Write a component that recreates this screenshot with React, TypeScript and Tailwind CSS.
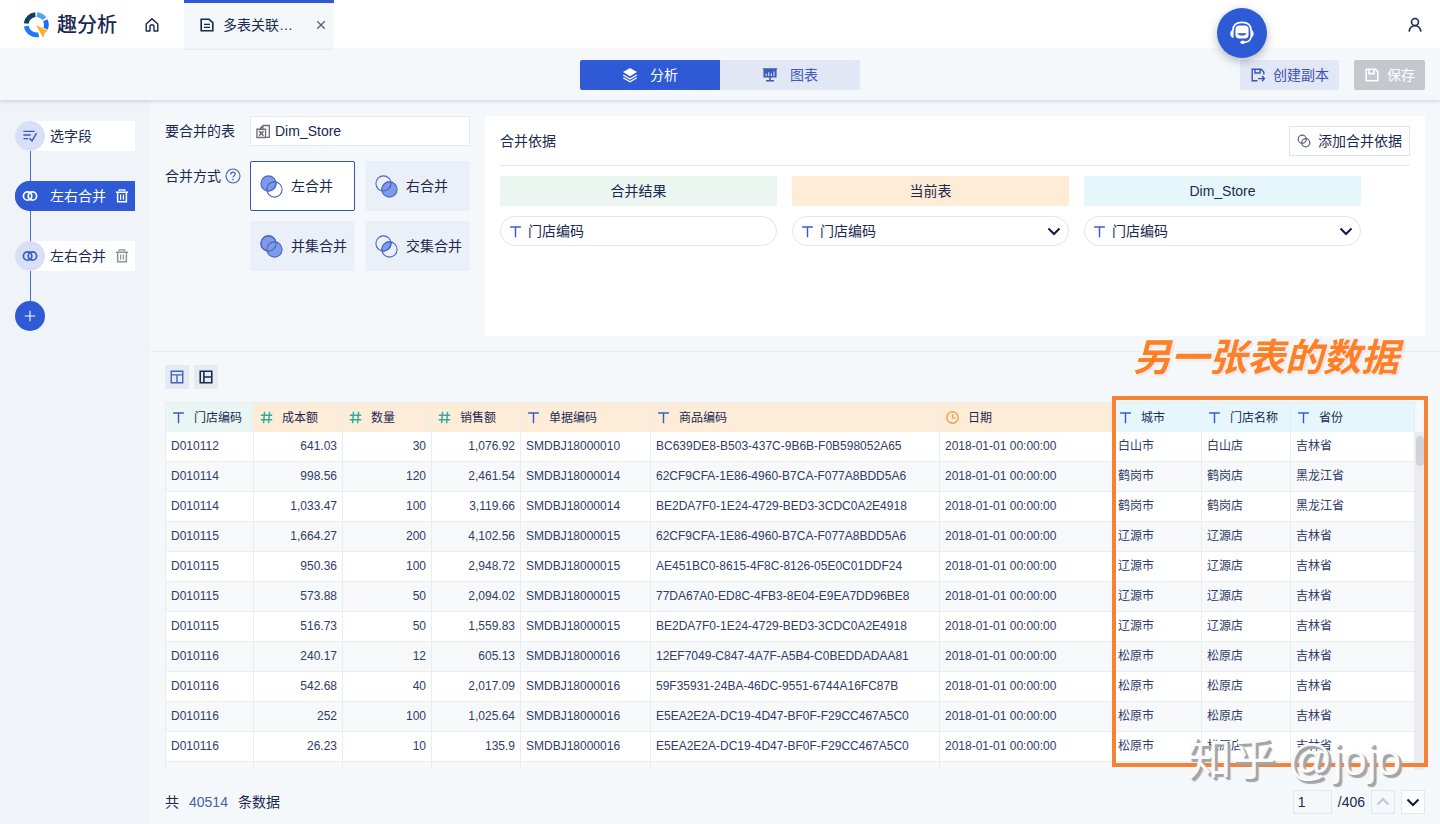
import { useState } from 'react';
import type { ReactNode } from 'react';
import clsx from 'clsx';

type FieldType = 'text' | 'number' | 'date';
type JoinMode = 'left' | 'right' | 'union' | 'inner';

interface Column {
  label: string;
  type: FieldType;
  width: string;
  tone: string;
}

const columns: Column[] = [
  { label: '门店编码', type: 'text', width: 'w-[88px]', tone: 'bg-[#e9f6f3]' },
  { label: '成本额', type: 'number', width: 'w-[89px]', tone: 'bg-[#fdecd8]' },
  { label: '数量', type: 'number', width: 'w-[89px]', tone: 'bg-[#fdecd8]' },
  { label: '销售额', type: 'number', width: 'w-[89px]', tone: 'bg-[#fdecd8]' },
  { label: '单据编码', type: 'text', width: 'w-[130px]', tone: 'bg-[#fdecd8]' },
  { label: '商品编码', type: 'text', width: '', tone: 'bg-[#fdecd8]' },
  { label: '日期', type: 'date', width: 'w-[173px]', tone: 'bg-[#fdecd8]' },
  { label: '城市', type: 'text', width: 'w-[89px]', tone: 'bg-[#e5f7fd]' },
  { label: '门店名称', type: 'text', width: 'w-[89px]', tone: 'bg-[#e5f7fd]' },
  { label: '省份', type: 'text', width: 'w-[124px]', tone: 'bg-[#e5f7fd]' },
];

const date = '2018-01-01 00:00:00';

const rows = [
  ['D010112', '641.03', '30', '1,076.92', 'SMDBJ18000010', 'BC639DE8-B503-437C-9B6B-F0B598052A65', date, '白山市', '白山店', '吉林省'],
  ['D010114', '998.56', '120', '2,461.54', 'SMDBJ18000014', '62CF9CFA-1E86-4960-B7CA-F077A8BDD5A6', date, '鹤岗市', '鹤岗店', '黑龙江省'],
  ['D010114', '1,033.47', '100', '3,119.66', 'SMDBJ18000014', 'BE2DA7F0-1E24-4729-BED3-3CDC0A2E4918', date, '鹤岗市', '鹤岗店', '黑龙江省'],
  ['D010115', '1,664.27', '200', '4,102.56', 'SMDBJ18000015', '62CF9CFA-1E86-4960-B7CA-F077A8BDD5A6', date, '辽源市', '辽源店', '吉林省'],
  ['D010115', '950.36', '100', '2,948.72', 'SMDBJ18000015', 'AE451BC0-8615-4F8C-8126-05E0C01DDF24', date, '辽源市', '辽源店', '吉林省'],
  ['D010115', '573.88', '50', '2,094.02', 'SMDBJ18000015', '77DA67A0-ED8C-4FB3-8E04-E9EA7DD96BE8', date, '辽源市', '辽源店', '吉林省'],
  ['D010115', '516.73', '50', '1,559.83', 'SMDBJ18000015', 'BE2DA7F0-1E24-4729-BED3-3CDC0A2E4918', date, '辽源市', '辽源店', '吉林省'],
  ['D010116', '240.17', '12', '605.13', 'SMDBJ18000016', '12EF7049-C847-4A7F-A5B4-C0BEDDADAA81', date, '松原市', '松原店', '吉林省'],
  ['D010116', '542.68', '40', '2,017.09', 'SMDBJ18000016', '59F35931-24BA-46DC-9551-6744A16FC87B', date, '松原市', '松原店', '吉林省'],
  ['D010116', '252', '100', '1,025.64', 'SMDBJ18000016', 'E5EA2E2A-DC19-4D47-BF0F-F29CC467A5C0', date, '松原市', '松原店', '吉林省'],
  ['D010116', '26.23', '10', '135.9', 'SMDBJ18000016', 'E5EA2E2A-DC19-4D47-BF0F-F29CC467A5C0', date, '松原市', '松原店', '吉林省'],
  ['', '', '', '', '', '', '', '', '', ''],
];

const joinModes: { id: JoinMode; label: string }[] = [
  { id: 'left', label: '左合并' },
  { id: 'right', label: '右合并' },
  { id: 'union', label: '并集合并' },
  { id: 'inner', label: '交集合并' },
];

const Icon = ({ size = 16, className, children }: { size?: number; className?: string; children: ReactNode }) => (
  <svg
    width={size}
    height={size}
    viewBox="0 0 16 16"
    fill="none"
    stroke="currentColor"
    strokeWidth="1.4"
    className={clsx('shrink-0', className)}
    aria-hidden="true"
  >
    {children}
  </svg>
);

const Logo = () => (
  <svg width="28" height="28" viewBox="0 0 28 28" fill="none" className="shrink-0" aria-hidden="true">
    <g strokeWidth="4.8">
      <path d="M4.1 12.6A10.2 10.2 0 0 1 13.4 3.6" stroke="#0d4066" />
      <path d="M15 3.6A10.2 10.2 0 0 1 22.4 7.8" stroke="#56a5f5" />
      <path d="M23.3 9.2A10.2 10.2 0 0 1 23.4 18" stroke="#1f6cf5" />
      <path d="M4.3 15.2A10.2 10.2 0 0 0 16.6 23.6" stroke="#1f7af8" />
    </g>
    <path d="M13.4 13.4L27 19.8L23.4 21.6L21 27.6Z" fill="#fbb01f" stroke="#fff" strokeWidth="0.8" />
  </svg>
);

const HomeIcon = () => (
  <Icon>
    <path d="M2.2 7L8 1.9L13.8 7V14H10V9.8A2 2 0 0 0 6 9.8V14H2.2Z" strokeLinejoin="round" />
  </Icon>
);

const DocIcon = () => (
  <Icon className="text-[#16294f]">
    <path d="M2.2 2.2H10L13.8 5.6V13.8H2.2Z" strokeWidth="1.6" />
    <path d="M5 7.4H11M5 10.4H11" />
  </Icon>
);

const LayersIcon = () => (
  <Icon>
    <path d="M8 1L15 5L8 9.2L1 5Z" fill="currentColor" stroke="none" />
    <path d="M1.2 8L8 12L14.8 8M1.2 10.8L8 14.8L14.8 10.8" strokeWidth="1.3" />
  </Icon>
);

const BoardIcon = () => (
  <Icon>
    <path d="M0.8 1.2H15.2V2.6H14.6V10.6H8.8V13H12V14.4H4V13H7.2V10.6H1.4V2.6H0.8Z" fill="currentColor" stroke="none" />
    <path d="M4.2 9V6.8M6.8 9V5.2M9.4 9V6.6M12 9V4.4" stroke="#e2e7f6" strokeWidth="1.1" />
  </Icon>
);

const CopyIcon = () => (
  <Icon>
    <path d="M7.5 13.8H2.2V2.2H11L13.8 5V7.6" />
    <path d="M5 2.4V6H10V2.4M8 11.6H14M12 9L14.4 11.6L12 14.2" />
  </Icon>
);

const SaveIcon = () => (
  <Icon>
    <path d="M2.2 2.2H11.4L13.8 4.6V13.8H2.2Z" strokeWidth="1.6" />
    <path d="M5 2.4V6.6H10V2.4" strokeWidth="1.6" />
  </Icon>
);

const UserIcon = () => (
  <Icon>
    <circle cx="8" cy="5" r="3.5" strokeWidth="1.6" />
    <path d="M2.2 14.6C2.6 10.8 5 8.8 8 8.8S13.4 10.8 13.8 14.6" strokeWidth="1.6" />
  </Icon>
);

const HeadsetIcon = () => (
  <svg width="28" height="28" viewBox="0 0 28 28" fill="none" stroke="#fff" aria-hidden="true">
    <path d="M5 11.5C5 5.4 8 3.4 14 3.4S23 5.4 23 11.5" strokeWidth="1.6" />
    <rect x="7.4" y="6.6" width="13.2" height="13" rx="4" fill="#fff" stroke="none" />
    <path d="M9.4 14.2H18.6C17.8 17.4 10.2 17.4 9.4 14.2Z" fill="#2f5ad6" stroke="none" />
    <path d="M5.6 10.4C1.2 11 1.2 18.4 5.6 19ZM22.4 10.4C26.8 11 26.8 18.4 22.4 19Z" fill="#fff" stroke="none" />
    <path d="M23 18.2C22.4 21.6 19.6 23.4 15.4 23.4" strokeWidth="1.6" />
    <ellipse cx="14.8" cy="23.2" rx="2.4" ry="1.7" fill="#fff" stroke="none" />
  </svg>
);

const SelectFieldsIcon = () => (
  <Icon>
    <path d="M1.4 3.4H12.6M1.4 7H8.6M1.4 10.6H6" />
    <path d="M7.4 10.2L10 12.8L14.6 5.2" />
  </Icon>
);

const LinkIcon = () => (
  <Icon>
    <circle cx="5.6" cy="8" r="4.2" strokeWidth="1.7" />
    <circle cx="10.4" cy="8" r="4.2" strokeWidth="1.7" />
  </Icon>
);

const TrashIcon = () => (
  <Icon size={14}>
    <path d="M5 2.4V1H11V2.4M1 3.6H15M3 4V14.6H13V4" strokeWidth="1.7" />
    <path d="M6.4 6.4V12.2M9.6 6.4V12.2" strokeWidth="1.4" />
  </Icon>
);

const ExcelIcon = () => (
  <Icon size={15} className="text-[#6b6e78]">
    <path d="M4.8 5.4V4.4L7.6 1.6H14.2V14.2H10.4" />
    <path d="M4.4 5L8 1.4V5Z" fill="currentColor" stroke="none" />
    <path d="M1 5.6H10.2V14.4H1Z" />
    <path d="M3.4 7.6L8 12.4M8 7.6L3.4 12.4" strokeWidth="1.6" />
  </Icon>
);

const HelpIcon = () => (
  <Icon className="text-[#3a5fc0]">
    <circle cx="8" cy="8" r="7" strokeWidth="1.1" />
    <path d="M5.8 6.4C5.8 3.4 10.4 3.6 10.2 6.2C10.1 7.6 8 7.8 8 9.6" strokeWidth="1.2" />
    <circle cx="8" cy="11.6" r="0.8" fill="currentColor" stroke="none" />
  </Icon>
);

const RingsIcon = () => (
  <Icon size={14} className="text-[#5d6274]">
    <circle cx="6" cy="6" r="4.6" />
    <circle cx="10" cy="10" r="4.6" />
  </Icon>
);

const Chevron = ({ up = false, className }: { up?: boolean; className?: string }) => (
  <Icon className={className}>
    <path d={up ? 'M2.5 10.5L8 5L13.5 10.5' : 'M2.5 5.5L8 11L13.5 5.5'} strokeWidth="2" />
  </Icon>
);

const JoinIcon = ({ mode }: { mode: JoinMode }) => (
  <svg width="23" height="23" viewBox="0 0 23 23" fill="none" stroke="#4767bd" strokeWidth="1.1" className="shrink-0" aria-hidden="true">
    <circle cx="8.5" cy="8.5" r="7.6" fill={mode === 'left' || mode === 'union' ? '#7f9aea' : 'none'} />
    <circle cx="14.5" cy="14.5" r="7.6" fill={mode === 'right' || mode === 'union' ? '#7f9aea' : 'none'} />
    {mode !== 'union' && (
      <path d="M15.8 7A7.6 7.6 0 0 1 7 15.8A7.6 7.6 0 0 1 15.8 7Z" fill="#7f9aea" />
    )}
    {mode === 'union' && <circle cx="8.5" cy="8.5" r="7.6" />}
  </svg>
);

const TypeIcon = ({ type }: { type: FieldType }) => {
  if (type === 'number') {
    return (
      <Icon size={13} className="text-[#37a99a]">
        <path d="M5.6 1L4.4 15M11.8 1L10.6 15M1 5.2H15M1 10.8H15" strokeWidth="1.8" />
      </Icon>
    );
  }
  if (type === 'date') {
    return (
      <Icon size={13} className="text-[#eda24c]">
        <circle cx="8" cy="8" r="7" strokeWidth="1.7" />
        <path d="M8 3.8V8.4H11.6" strokeWidth="1.5" />
      </Icon>
    );
  }
  return (
    <Icon size={13} className="text-[#3c5cc4]">
      <path d="M1.4 2.4H14.6M8 2.4V15" strokeWidth="1.8" />
    </Icon>
  );
};

const Header = () => (
  <header className="flex h-[50px] shrink-0 items-stretch bg-white">
    <div className="flex w-[118px] items-center gap-[7px] pl-[22px]">
      <Logo />
      <span className="text-xl font-medium whitespace-nowrap">趣分析</span>
    </div>
    <a href="#home" aria-label="首页" className="ml-[26px] flex items-center">
      <HomeIcon />
    </a>
    <div className="ml-6 flex w-[150px] items-center border-t-[3px] border-[#2f5ad6] bg-[#f5f8fb] pr-2 pb-[3px] pl-[15px] text-sm">
      <DocIcon />
      <span className="ml-2 flex-1 truncate">多表关联…</span>
      <button aria-label="关闭" className="text-[#5b6070]">
        <Icon size={10}>
          <path d="M2 2L14 14M14 2L2 14" strokeWidth="2.2" />
        </Icon>
      </button>
    </div>
    <button aria-label="用户" className="mr-[17px] ml-auto">
      <UserIcon />
    </button>
  </header>
);

const Toolbar = () => (
  <div className="relative z-10 grid h-[50px] shrink-0 grid-cols-[1fr_280px_1fr] items-center bg-[#f5f8fb] px-[15px] text-sm shadow-[0_1px_4px_rgba(60,80,100,0.25)]">
    <div className="col-start-2 grid h-[30px] grid-cols-2">
      <button className="flex items-center justify-center gap-3 rounded-l-xs bg-[#2f5ad6] text-white">
        <LayersIcon />
        分析
      </button>
      <button className="flex items-center justify-center gap-3 rounded-r-xs bg-[#e2e7f6] text-[#3c5cb8]">
        <BoardIcon />
        图表
      </button>
    </div>
    <div className="flex h-[30px] justify-end gap-[15px]">
      <button className="flex items-center gap-[7px] rounded-xs bg-[#e2e7f6] px-[10px] text-[#3c50b4]">
        <CopyIcon />
        创建副本
      </button>
      <button className="flex items-center gap-[7px] rounded-xs bg-[#c6c6cf] px-[10px] text-white">
        <SaveIcon />
        保存
      </button>
    </div>
  </div>
);

const Step = ({ label, icon, active = false, removable = false }: { label: string; icon: ReactNode; active?: boolean; removable?: boolean }) => (
  <li>
    <div
      className={clsx(
        'flex h-[30px] items-center rounded-l-full',
        active ? 'bg-[#2f5ad6] text-white' : 'bg-white',
      )}
    >
      <span
        className={clsx(
          'flex size-[30px] items-center justify-center rounded-full',
          active ? 'bg-[#2f5ad6]' : 'bg-[#d9e0f5] text-[#3459c9]',
        )}
      >
        {icon}
      </span>
      <span className="ml-[5px]">{label}</span>
      {removable && (
        <button aria-label={`删除${label}`} className={clsx('mr-1.5 ml-auto', !active && 'text-[#8f9299]')}>
          <TrashIcon />
        </button>
      )}
    </div>
    <div className="ml-[15px] h-[30px] w-px bg-[#4a6cd0]" />
  </li>
);

const Sidebar = () => (
  <aside className="w-[150px] shrink-0 bg-[#f0f3f7] px-[15px] pt-[21px] text-sm">
    <ol>
      <Step label="选字段" icon={<SelectFieldsIcon />} />
      <Step label="左右合并" icon={<LinkIcon />} active removable />
      <Step label="左右合并" icon={<LinkIcon />} removable />
    </ol>
    <button aria-label="添加步骤" className="flex size-[30px] items-center justify-center rounded-full bg-[#2f5ad6] text-white">
      <Icon size={12}>
        <path d="M8 1V15M1 8H15" />
      </Icon>
    </button>
  </aside>
);

const JoinSettings = () => {
  const [mode, setMode] = useState<JoinMode>('left');

  return (
    <div className="grid grid-cols-[70px_220px] content-start gap-x-[15px] gap-y-[15px]">
      <label htmlFor="join-table" className="leading-[30px] whitespace-nowrap">
        要合并的表
      </label>
      <div className="flex h-[30px] items-center gap-1 border border-[#e5e8ee] bg-white px-[5px]">
        <ExcelIcon />
        <input id="join-table" defaultValue="Dim_Store" className="w-full min-w-0 outline-none" />
      </div>
      <div className="flex h-[30px] items-center gap-1 whitespace-nowrap">
        合并方式
        <HelpIcon />
      </div>
      <div className="grid grid-cols-2 gap-[10px]">
        {joinModes.map((item) => (
          <button
            key={item.id}
            onClick={() => setMode(item.id)}
            className={clsx(
              'flex h-[50px] items-center gap-2 rounded-xs border pl-[9px] whitespace-nowrap',
              mode === item.id ? 'border-[#3555b0] bg-white' : 'border-[#ebeff7] bg-[#ebeff7]',
            )}
          >
            <JoinIcon mode={item.id} />
            {item.label}
          </button>
        ))}
      </div>
    </div>
  );
};

const KeySelect = ({ title, tone }: { title: string; tone: string }) => (
  <div>
    <div className={clsx('h-[30px] text-center leading-[30px]', tone)}>{title}</div>
    <div className="mt-[10px] flex h-[30px] items-center gap-1.5 rounded-full border border-[#e2e5ea] bg-white pr-[6px] pl-2">
      <TypeIcon type="text" />
      <select aria-label={title} className="min-w-0 flex-1 appearance-none bg-transparent outline-none">
        <option>门店编码</option>
      </select>
      <Chevron className="text-[#101c3d]" />
    </div>
  </div>
);

const JoinKeys = () => (
  <div className="h-[220px] flex-1 bg-white px-[15px]">
    <div className="flex h-[50px] items-center justify-between border-b border-[#e4e6ea]">
      <h2>合并依据</h2>
      <button className="flex h-[30px] items-center gap-[7px] border border-[#dfe2e8] px-[7px]">
        <RingsIcon />
        添加合并依据
      </button>
    </div>
    <div className="grid grid-cols-3 gap-[15px] pt-[10px] pr-[49px]">
      <div>
        <div className="h-[30px] bg-[#ebf6f1] text-center leading-[30px]">合并结果</div>
        <div className="mt-[10px] flex h-[30px] items-center gap-1.5 rounded-full border border-[#e2e5ea] bg-white px-2">
          <TypeIcon type="text" />
          <input aria-label="合并结果" defaultValue="门店编码" className="min-w-0 flex-1 outline-none" />
        </div>
      </div>
      <KeySelect title="当前表" tone="bg-[#feecd7]" />
      <KeySelect title="Dim_Store" tone="bg-[#e5f7fb]" />
    </div>
  </div>
);

const DataTable = () => (
  <div className="relative min-h-0 flex-1">
    <div className="flex h-full overflow-hidden">
      <table className="w-full table-fixed border-separate border-spacing-0 self-start border-l border-[#e9ecf1] text-xs">
        <thead>
          <tr className="h-[30px]">
            {columns.map((col) => (
              <th
                key={col.label}
                className={clsx('border-t border-r border-[#e9ecf0] p-0 pl-[6px] font-normal', col.width, col.tone)}
              >
                <span className="flex items-center gap-[9px] whitespace-nowrap">
                  <TypeIcon type={col.type} />
                  {col.label}
                </span>
              </th>
            ))}
          </tr>
        </thead>
        <tbody className="text-[#303c66]">
          {rows.map((row, i) => (
            <tr key={i} className="h-[30px] bg-white even:bg-[#f6f8fa]">
              {row.map((cell, j) => (
                <td
                  key={j}
                  className={clsx(
                    'border-r border-b border-[#e9ecf1] px-[5px] pt-0 pb-px whitespace-nowrap',
                    columns[j].type === 'number' && 'text-right',
                  )}
                >
                  {cell}
                </td>
              ))}
            </tr>
          ))}
        </tbody>
      </table>
      <div className="mt-[30px] w-[10px] shrink-0 bg-[#ececf0] px-px pt-1">
        <div className="h-[30px] rounded-full bg-[#d2d3da]" />
      </div>
    </div>

    {/* Annotation around the joined columns */}
    <div className="pointer-events-none absolute -top-[6px] -right-[3px] bottom-[3px] w-[316px] border-4 border-[#f58235]" />
    <p className="pointer-events-none absolute -top-[68px] right-[26px] text-[38px] leading-[48px] font-bold whitespace-nowrap text-[#fd7f28] italic [text-shadow:0_0_2px_#fff,0_0_3px_#fff,1px_1px_3px_#d8c8ba]">
      另一张表的数据
    </p>
    <p className="pointer-events-none absolute right-6 -bottom-[18px] text-[44px] leading-[56px] whitespace-nowrap text-[#f8fafb] [text-shadow:2px_2px_0_#a3a5a8,3px_3px_1px_#a3a5a8]">
      知乎 @jojo
    </p>
  </div>
);

const Footer = () => (
  <footer className="flex h-[54px] shrink-0 items-center gap-[6px] pt-[10px] text-sm">
    <span className="mr-auto flex gap-[10px]">
      共<span className="text-[#4560ad]">40514</span>条数据
    </span>
    <input aria-label="页码" defaultValue="1" className="h-6 w-[39px] border border-[#e3e7ec] bg-transparent px-1 outline-none" />
    <span>/406</span>
    <button aria-label="上一页" className="flex size-6 items-center justify-center border border-[#e3e7ec] text-[#c3c6cc]">
      <Chevron up />
    </button>
    <button aria-label="下一页" className="flex size-6 items-center justify-center border border-[#e3e7ec] bg-white text-[#101c3d]">
      <Chevron />
    </button>
  </footer>
);

const App = () => {
  return (
    <div className="relative flex h-screen flex-col overflow-hidden bg-[#f5f8fb] font-['Liberation_Sans','Noto_Sans_CJK_SC',sans-serif] text-[#1a2950]">
      <Header />
      <Toolbar />
      <button
        aria-label="客服"
        className="absolute top-2 right-[173px] z-20 flex size-[50px] items-center justify-center rounded-full bg-[#2f5ad6] shadow-[0_3px_10px_rgba(50,60,80,0.35)]"
      >
        <HeadsetIcon />
      </button>
      <div className="flex min-h-0 flex-1">
        <Sidebar />
        <main className="flex min-w-0 flex-1 flex-col">
          <section className="flex gap-[15px] border-b border-[#e9edf2] px-[15px] pt-4 pb-[15px] text-sm">
            <JoinSettings />
            <JoinKeys />
          </section>
          <section className="flex min-h-0 flex-1 flex-col px-[15px] pt-[13px]">
            <div className="mb-[13px] flex gap-[5px]">
              <button aria-label="表格视图" className="flex size-6 items-center justify-center bg-[#e6eaf1] text-[#4161c9]">
                <Icon size={14}>
                  <path d="M1.4 1.4H14.6V14.6H1.4ZM1.4 5.6H14.6M8 5.6V14.6" strokeWidth="1.6" />
                </Icon>
              </button>
              <button aria-label="列视图" className="flex size-6 items-center justify-center bg-[#e6eaf1]">
                <Icon size={14}>
                  <path d="M1.4 1.4H14.6V14.6H1.4ZM5.6 1.4V14.6M5.6 8H14.6" strokeWidth="1.8" />
                </Icon>
              </button>
            </div>
            <DataTable />
            <Footer />
          </section>
        </main>
      </div>
    </div>
  );
};

export default App;
